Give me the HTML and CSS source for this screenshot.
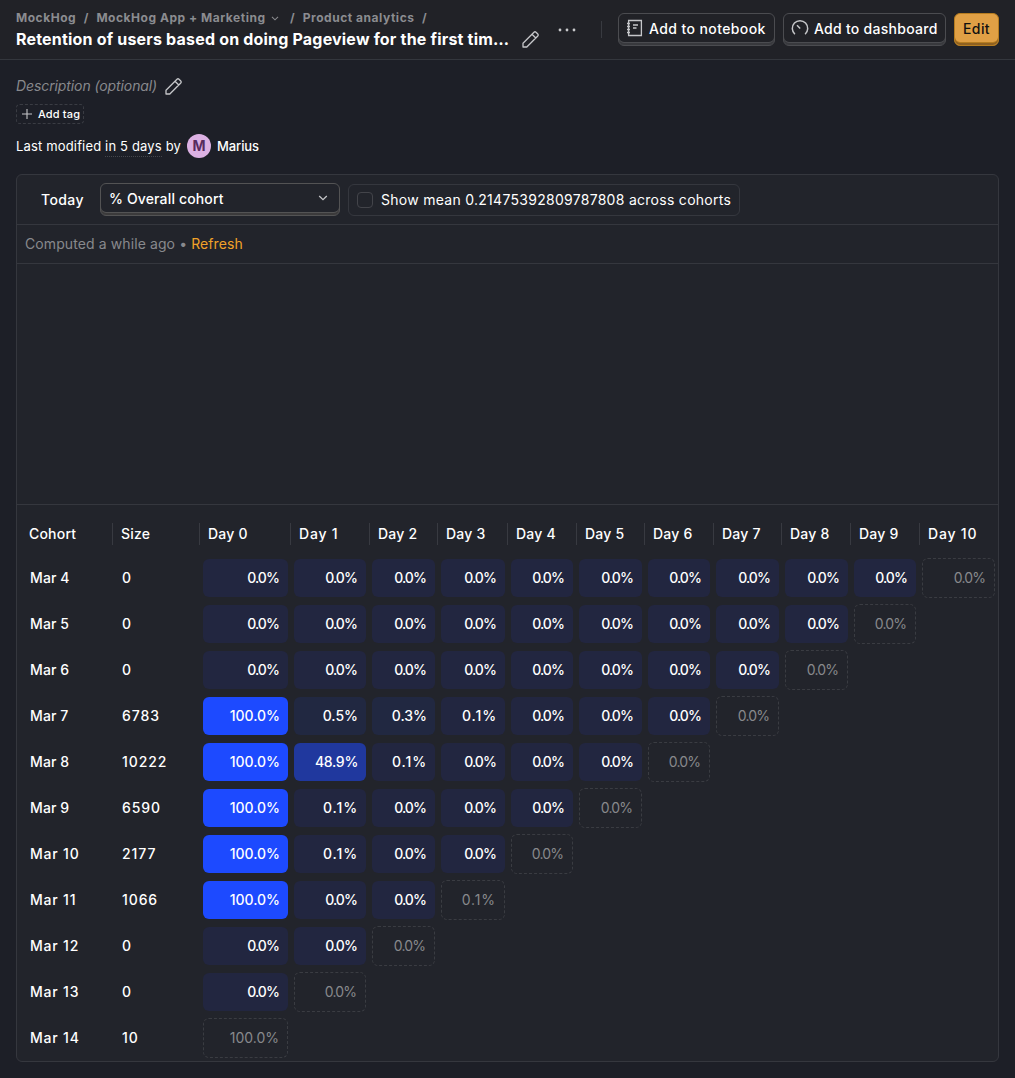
FILE: index.html
```html
<!DOCTYPE html>
<html lang="en">
<head>
<meta charset="utf-8">
<title>Retention insight</title>
<link rel="stylesheet" href="styles.css">
</head>
<body>
<svg class="defs" width="0" height="0" aria-hidden="true">
  <symbol id="pencil" viewBox="0 0 18 18"><path d="M1 17V13.2L12 2.2Q13 1.2 14 2.2L15.8 4Q16.8 5 15.8 6L4.8 17ZM10 4.2L13.8 8" fill="none" stroke="currentColor" stroke-width="1.3" stroke-linejoin="round"/></symbol>
  <symbol id="chevron" viewBox="0 0 10 6"><path d="M1.2 1L5 4.6L8.8 1" fill="none" stroke="currentColor" stroke-width="1.3"/></symbol>
</svg>
<header class="topbar">
  <div class="heading">
    <nav class="crumbs">
      <span>MockHog</span><i>/</i><span>MockHog App + Marketing</span><svg class="crumb-chevron"><use href="#chevron"/></svg><i>/</i><span>Product analytics</span><i>/</i>
    </nav>
    <div class="title-row"><h1>Retention of users based on doing Pageview for the first tim…</h1><svg class="pencil"><use href="#pencil"/></svg></div>
  </div>
  <div class="actions">
    <svg class="more" viewBox="0 0 18 4"><circle cx="2" cy="2" r="1.4"/><circle cx="9" cy="2" r="1.4"/><circle cx="16" cy="2" r="1.4"/></svg>
    <span class="divider"></span>
    <button class="button notebook"><svg viewBox="0 0 18 18"><path d="M2.6 1.5H15.4V16.5H2.6ZM7 6H12M7 9H10.5M1 4.5H4M1 7.5H4M1 10.5H4M1 13.5H4" fill="none" stroke="currentColor" stroke-width="1.3"/></svg>Add to notebook</button>
    <button class="button dashboard"><svg viewBox="0 0 18 18"><path d="M3.9 15.2A7.7 7.7 0 1 1 14.1 15.2M9.2 9.5L6 6.3" fill="none" stroke="currentColor" stroke-width="1.5"/></svg>Add to dashboard</button>
    <button class="button primary">Edit</button>
  </div>
</header>
<main>
  <div class="description"><em>Description (optional)</em><svg class="pencil"><use href="#pencil"/></svg></div>
  <button class="tag"><svg viewBox="0 0 12 12"><path d="M6 1V11M1 6H11" stroke="currentColor" stroke-width="1.1"/></svg>Add tag</button>
  <div class="modified"><span class="edited">Last modified <span class="when">in 5 days</span> by</span><span class="avatar">M</span><b>Marius</b></div>
  <section class="card">
    <div class="filters">
      <span class="today">Today</span>
      <button class="button select">% Overall cohort<svg><use href="#chevron"/></svg></button>
      <label class="mean"><span class="checkbox"></span>Show mean 0.21475392809787808 across cohorts</label>
    </div>
    <div class="computed">Computed a while ago • <a>Refresh</a></div>
    <div class="chart"></div>
    <div class="table" id="table"></div>
  </section>
</main>
<script src="table.js"></script>
</body>
</html>
```
FILE: table.js
```js
const cohorts = [
  ["Mar 4", 0, [0, 0, 0, 0, 0, 0, 0, 0, 0, 0, 0]],
  ["Mar 5", 0, [0, 0, 0, 0, 0, 0, 0, 0, 0, 0]],
  ["Mar 6", 0, [0, 0, 0, 0, 0, 0, 0, 0, 0]],
  ["Mar 7", 6783, [100, 0.5, 0.3, 0.1, 0, 0, 0, 0]],
  ["Mar 8", 10222, [100, 48.9, 0.1, 0, 0, 0, 0]],
  ["Mar 9", 6590, [100, 0.1, 0, 0, 0, 0]],
  ["Mar 10", 2177, [100, 0.1, 0, 0, 0]],
  ["Mar 11", 1066, [100, 0, 0, 0.1]],
  ["Mar 12", 0, [0, 0, 0]],
  ["Mar 13", 0, [0, 0]],
  ["Mar 14", 10, [100]],
];

function shade(value) {
  if (value === 100) return "full";
  if (value > 10) return "half";
  return value >= 0.3 ? "low" : "zero";
}

function tracking(value) {
  if (value === 0) return "tight";
  return value === 0.1 ? "loose" : "";
}

const titles = ["Cohort", "Size", ...Array.from({ length: 11 }, (_, day) => `Day ${day}`)];
const head = `<div class="row head">${titles
  .map((title) => `<span class="${title.includes("1") ? "wide" : ""}">${title}</span>`)
  .join("")}</div>`;
const rows = cohorts.map(([name, size, values]) => {
  const cells = values.map((value, index) => {
    const kind = index === values.length - 1 ? "pending" : shade(value);
    return `<span class="cell ${kind} ${tracking(value)}">${value.toFixed(1)}%</span>`;
  });
  const wide = name.includes("1") ? "wide" : "";
  return `<div class="row"><span class="name ${wide}">${name}</span><span class="size">${size}</span>${cells.join("")}</div>`;
});
document.getElementById("table").innerHTML = head + rows.join("");
```
FILE: styles.css
```css
* { box-sizing: border-box; }
body { margin: 0; background: #1d1f27; color: #fff; font: 14px/20px Inter, "Noto Sans", sans-serif; }
svg { flex: none; display: block; }
.defs { position: absolute; }
button { font: inherit; color: inherit; background: none; margin: 0; }

.topbar { height: 60px; background: #212227; border-bottom: 1px solid #34373d; display: flex; justify-content: space-between; padding: 0 16px; }
.heading { width: 525px; padding-top: 10px; }
.crumbs { display: flex; align-items: center; height: 16px; font-size: 12px; line-height: 16px; font-weight: 700; color: #8b8c90; white-space: nowrap; letter-spacing: 0.53px; }
.crumbs i { font-style: normal; margin: 0 7.5px; }
.crumb-chevron { width: 8px; height: 5px; margin: 0 4px 0 5px; }
.title-row { display: flex; align-items: center; height: 26px; }
h1 { margin: 0; width: 493px; font-size: 16px; line-height: 24px; font-weight: 700; white-space: nowrap; letter-spacing: 0.19px; }
.pencil { width: 18px; height: 18px; color: #c5c6c9; }
.title-row .pencil { margin-left: 13px; }
.actions { display: flex; gap: 8px; padding-top: 13px; }
.more { width: 18px; height: 4px; fill: #c8c9cb; margin: 15px 17px 0 0; }
.divider { width: 1px; height: 17px; background: #383a40; margin: 8px 8px 0 0; }
.button { height: 33px; padding: 0 8px 2px; border: 1px solid #4b4c50; border-radius: 6px; box-shadow: inset 0 -2px #38393d, inset 0 -3px #4b4c50; display: flex; align-items: center; font-weight: 500; white-space: nowrap; }
.button svg { width: 18px; height: 18px; color: #c5c6c9; margin: -1px 5px 0 0; }
.notebook { width: 157px; padding-left: 7px; letter-spacing: 0.4px; }
.dashboard { width: 163px; padding-left: 7px; letter-spacing: 0.27px; }
.primary { width: 45px; justify-content: center; background: #e0a045; border-color: #b57c20; box-shadow: inset 0 -2px #8f6120, inset 0 -3px #b57c20; color: #111; letter-spacing: 0.4px; }

main { padding: 16px; }
.description { display: flex; align-items: center; gap: 8px; height: 20px; color: #88898d; letter-spacing: -0.1px; }
.tag { width: 68px; height: 20px; margin-top: 8px; padding: 0 0 0 4px; border: 1px dashed #3a3c43; border-radius: 4px; display: flex; align-items: center; gap: 5px; font-size: 11px; line-height: 16px; font-weight: 500; white-space: nowrap; letter-spacing: 0.15px; }
.tag svg { width: 12px; height: 12px; color: #c5c6c9; }
.modified { display: flex; align-items: center; gap: 6px; height: 24px; margin-top: 10px; font-size: 13px; }
.modified b { font-weight: 500; letter-spacing: -0.1px; }
.edited { letter-spacing: 0.16px; }
.when { padding-bottom: 2px; border-bottom: 1px dotted #45474d; }
.avatar { width: 24px; height: 24px; border-radius: 50%; background: #dcb1e3; color: #572b5e; font-size: 14px; line-height: 24px; font-weight: 700; text-align: center; }

.card { height: 888px; margin-top: 16px; border: 1px solid #35373e; border-radius: 6px; background: #22242b; }
.filters { height: 50px; border-bottom: 1px solid #35373e; padding: 8px 8px 8px 24px; display: flex; }
.today { width: 59px; padding-top: 7px; font-weight: 500; letter-spacing: 0.4px; }
.select { width: 240px; justify-content: space-between; border-color: #535354; box-shadow: inset 0 -2px #3b3a3b, inset 0 -3px #535354; letter-spacing: 0.15px; }
.select svg { width: 10px; height: 6px; margin: -1px 3px 0 0; }
.mean { width: 392px; height: 32px; margin: 1px 0 0 8px; padding-left: 8px; border: 1px solid #35373e; border-radius: 6px; display: flex; align-items: center; gap: 8px; white-space: nowrap; letter-spacing: 0.28px; }
.checkbox { width: 16px; height: 16px; border: 1px solid #43444a; border-radius: 4px; }
.computed { height: 39px; border-bottom: 1px solid #35373e; padding: 9px 8px; color: #88898d; letter-spacing: 0.1px; }
.computed a { color: #f1a228; }
.chart { height: 241px; border-bottom: 1px solid #35373e; }

.row { display: grid; grid-template-columns: 96px 87px 91px 78px 69px 70px 68px 69px 68px 69px 69px 68px 79px; height: 46px; align-items: center; font-weight: 500; white-space: nowrap; }
.head { grid-template-columns: 95px 87px 91px 79px 68px 70px 69px 68px 69px 68px 69px 69px 79px; height: 50px; align-items: start; padding-top: 18px; letter-spacing: 0.2px; }
.head span { height: 22px; line-height: 22px; padding-left: 8px; border-left: 1px solid #383a41; }
.head span:first-child { border-left: 0; padding-left: 12px; }
.name { padding-left: 13px; letter-spacing: 0.1px; }
.head .wide { letter-spacing: 0.8px; }
.name.wide { letter-spacing: 0.8px; }
.size { padding-left: 9px; letter-spacing: 0.9px; }
.cell { height: 38px; margin: 0 3px; padding-right: 8px; border-radius: 6px; line-height: 38px; text-align: right; }
.cell.tight { letter-spacing: -0.9px; padding-right: 9px; }
.cell.loose { letter-spacing: 0.9px; }
.zero { background: #222640; }
.low { background: #212841; }
.half { background: #20389e; letter-spacing: -0.3px; }
.full { background: #1d4aff; }
.pending { height: 40px; border: 1px dashed #3a3c42; color: #88898c; font-weight: 400; }
```
